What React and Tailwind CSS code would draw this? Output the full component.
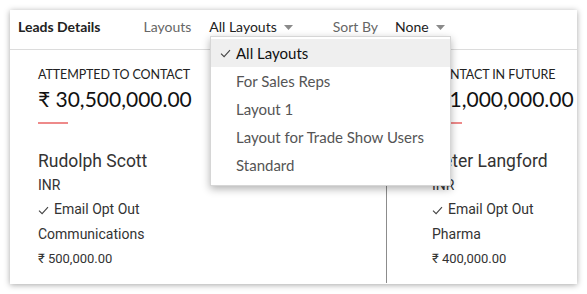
const layouts = ['All Layouts', 'For Sales Reps', 'Layout 1', 'Layout for Trade Show Users', 'Standard']

const cards = [
  { stage: 'ATTEMPTED TO CONTACT', total: '₹ 30,500,000.00', name: 'Rudolph Scott', currency: 'INR', industry: 'Communications', revenue: '₹ 500,000.00' },
  { stage: 'CONTACT IN FUTURE', total: '₹ 1,000,000.00', name: 'Peter Langford', currency: 'INR', industry: 'Pharma', revenue: '₹ 400,000.00' },
]

function Caret() {
  return (
    <svg width="9" height="5" viewBox="0 0 9 5" className="ml-[7px] mt-[2px]">
      <path d="M0 0h9L4.5 5z" fill="#8a8a8a" />
    </svg>
  )
}

function Check({ className = '' }) {
  return (
    <svg width="11" height="9" viewBox="0 0 11 9" className={className}>
      <path d="M1 4.6l3.1 3.1L10 1.2" fill="none" stroke="#444" strokeWidth="1.1" />
    </svg>
  )
}

function Card({ card, first }) {
  return (
    <div className={`shrink-0 pt-[17px] ${first ? 'w-[377px] pl-[28px] border-r border-[#8c8c8c]' : 'w-[300px] pl-[45px]'}`}>
      <p className="text-[12.5px] leading-[16px] text-[#222] font-['Lato',sans-serif] tracking-[-0.1px]">{card.stage}</p>
      <p className="mt-[2px] text-[21px] leading-[28px] text-[#111] font-['Lato',sans-serif]">{card.total}</p>
      <div className="mt-[9px] w-[30px] h-[2px] bg-[#ee8a8a]" />
      <p className="mt-[25px] text-[17.5px] leading-[24px] text-[#333] font-['Roboto',sans-serif]">{card.name}</p>
      <p className="text-[14px] leading-[24px] text-[#333] font-['Roboto',sans-serif]">{card.currency}</p>
      <div className="flex items-center h-[25px] text-[14px] text-[#333] font-['Roboto',sans-serif]">
        <Check className="mr-[5px] mt-[1px]" />
        <span>Email Opt Out</span>
      </div>
      <p className="text-[14px] leading-[25px] text-[#333] font-['Roboto',sans-serif]">{card.industry}</p>
      <p className="text-[13px] leading-[24px] text-[#333] font-['Roboto',sans-serif]">{card.revenue}</p>
    </div>
  )
}

export default function App() {
  return (
    <div className="w-[587px] h-[294px] bg-white p-[10px] overflow-hidden">
      <div className="relative h-[274px] w-[567px] bg-white shadow-[0_1px_6px_rgba(0,0,0,0.35)] overflow-hidden">
        <div className="flex items-center h-[40px] pb-[7px] border-b border-[#dcdcdc] px-[8px] font-['Lato',sans-serif] text-[14px]">
          <span className="font-bold text-[#222]">Leads Details</span>
          <span className="ml-[43px] text-[#666]">Layouts</span>
          <span className="ml-[18px] flex items-center text-[#222]">All Layouts<Caret /></span>
          <span className="ml-[40px] text-[#666]">Sort By</span>
          <span className="ml-[17px] flex items-center text-[#222]">None<Caret /></span>
        </div>
        <div className="flex h-[233px]">
          {cards.map((c, i) => <Card key={c.name} card={c} first={i === 0} />)}
        </div>
        <div className="absolute left-[200px] top-[26px] w-[241px] border border-[#d6d6d6] bg-white pt-[2px] pb-[6px] shadow-[0_3px_8px_rgba(0,0,0,0.3)] font-['Lato',sans-serif] text-[15px]">
          {layouts.map((l, i) => (
            <div key={l} className={`flex items-center h-[28px] ${i === 0 ? 'bg-[#efefef] text-[#111]' : 'text-[#555]'}`}>
              <span className="w-[25px] flex justify-center pl-[4px]">{i === 0 && <Check />}</span>
              <span>{l}</span>
            </div>
          ))}
        </div>
      </div>
    </div>
  )
}
